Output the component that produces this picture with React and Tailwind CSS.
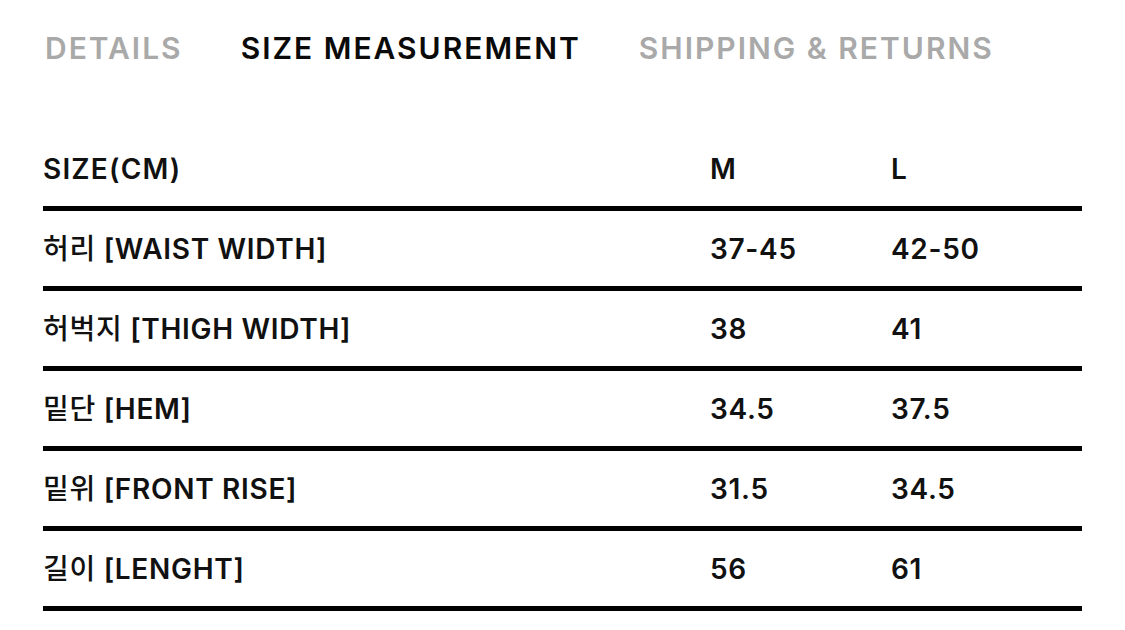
const tabs = [
  { label: 'DETAILS', active: false },
  { label: 'SIZE MEASUREMENT', active: true },
  { label: 'SHIPPING & RETURNS', active: false }
];

const rows = [
  { ko: '허리', en: '[WAIST WIDTH]', m: '37-45', l: '42-50' },
  { ko: '허벅지', en: '[THIGH WIDTH]', m: '38', l: '41' },
  { ko: '밑단', en: '[HEM]', m: '34.5', l: '37.5' },
  { ko: '밑위', en: '[FRONT RISE]', m: '31.5', l: '34.5' },
  { ko: '길이', en: '[LENGHT]', m: '56', l: '61' }
];

export default function App() {
  return (
    <div className="h-[630px] w-[1125px] overflow-hidden bg-white font-['Inter','Noto_Sans_CJK_KR',sans-serif] text-[#111]">
      <nav className="flex h-[96px] items-center gap-[58px] pl-[45px]">
        {tabs.map((tab) => (
          <span
            key={tab.label}
            className={`text-[30px] font-semibold tracking-[2px] ${tab.active ? 'text-[#0a0a0a]' : 'text-[#a9a9a9]'}`}
          >
            {tab.label}
          </span>
        ))}
      </nav>
      <div className="mt-[35px] px-[43px]">
        <div className="grid h-[80px] grid-cols-[667px_181px_1fr] items-center border-b-[5px] border-black text-[28px] font-semibold tracking-[1.2px]">
          <span>SIZE(CM)</span>
          <span>M</span>
          <span>L</span>
        </div>
        {rows.map((row) => (
          <div
            key={row.en}
            className="grid h-[80px] grid-cols-[667px_181px_1fr] items-center border-b-[5px] border-black text-[28px] font-semibold tracking-[0.7px]"
          >
            <span>
              <span className="font-medium">{row.ko}</span> {row.en}
            </span>
            <span>{row.m}</span>
            <span>{row.l}</span>
          </div>
        ))}
      </div>
    </div>
  );
}
